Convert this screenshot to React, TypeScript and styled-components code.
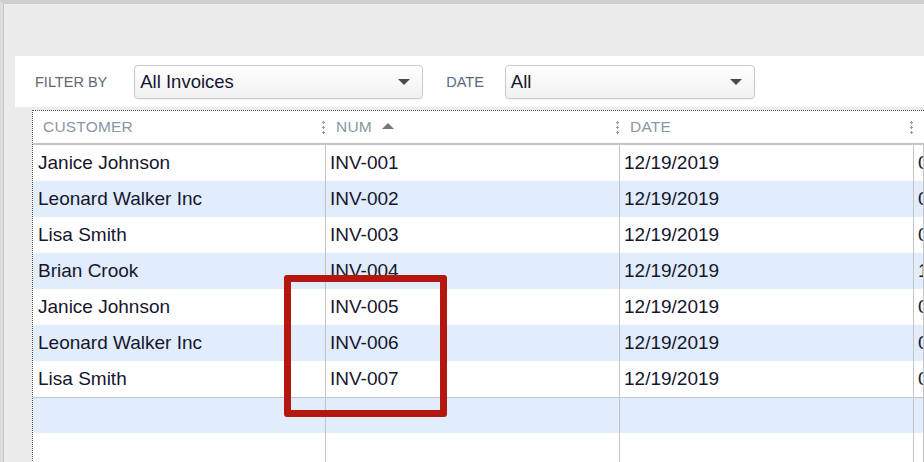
import React from "react";
import styled, { createGlobalStyle } from "styled-components";

type Invoice = { customer: string; num: string; date: string; extra: string };

const invoices: Invoice[] = [
  { customer: "Janice Johnson", num: "INV-001", date: "12/19/2019", extra: "0" },
  { customer: "Leonard Walker Inc", num: "INV-002", date: "12/19/2019", extra: "0" },
  { customer: "Lisa Smith", num: "INV-003", date: "12/19/2019", extra: "0" },
  { customer: "Brian Crook", num: "INV-004", date: "12/19/2019", extra: "1" },
  { customer: "Janice Johnson", num: "INV-005", date: "12/19/2019", extra: "0" },
  { customer: "Leonard Walker Inc", num: "INV-006", date: "12/19/2019", extra: "0" },
  { customer: "Lisa Smith", num: "INV-007", date: "12/19/2019", extra: "0" },
];

export default function App() {
  return (
    <>
      <GlobalStyle />
      <Window>
        <Panel>
          <FilterBar>
            <FilterLabel $after={27}>FILTER BY</FilterLabel>
            <Dropdown $width={289}>
              <span>All Invoices</span>
              <Caret />
            </Dropdown>
            <FilterLabel $before={23} $after={21}>
              DATE
            </FilterLabel>
            <Dropdown $width={250}>
              <span>All</span>
              <Caret />
            </Dropdown>
          </FilterBar>

          <Table>
            <HeaderRow>
              <HeaderCell>
                <span>CUSTOMER</span>
                <Grip />
              </HeaderCell>
              <HeaderCell>
                <HeaderTitle>
                  NUM <SortArrow />
                </HeaderTitle>
                <Grip />
              </HeaderCell>
              <HeaderCell>
                <span>DATE</span>
                <Grip />
              </HeaderCell>
              <HeaderCell />
            </HeaderRow>

            {invoices.map((inv, i) => (
              <Row key={inv.num} $alt={i % 2 === 1}>
                <Cell>{inv.customer}</Cell>
                <Cell>{inv.num}</Cell>
                <Cell>{inv.date}</Cell>
                <Cell>{inv.extra}</Cell>
              </Row>
            ))}
            <Row $alt $divider>
              <Cell />
              <Cell />
              <Cell />
              <Cell />
            </Row>
            <Row>
              <Cell />
              <Cell />
              <Cell />
              <Cell />
            </Row>
          </Table>
        </Panel>
        <Highlight />
      </Window>
    </>
  );
}

const GlobalStyle = createGlobalStyle`
  html, body {
    margin: 0;
    padding: 0;
    width: 924px;
    height: 462px;
    overflow: hidden;
    background: #ececec;
    font-family: "Liberation Sans", Arial, sans-serif;
  }
`;

const Window = styled.div`
  position: relative;
  width: 924px;
  height: 462px;
  box-sizing: border-box;
  border-top: 4px solid #cfcfcf;
  border-left: 3px solid #dedede;
  overflow: hidden;
`;

const Panel = styled.div`
  height: 100%;
  box-sizing: border-box;
  border-left: 1px solid #c6c6c6;
  background: #ececec;
  padding: 52px 0 0 11px;
  display: flex;
  flex-direction: column;
`;

const FilterBar = styled.div`
  height: 51px;
  background: #ffffff;
  display: flex;
  align-items: center;
  padding-left: 20px;
  flex-shrink: 0;
`;

const FilterLabel = styled.span<{ $before?: number; $after?: number }>`
  font-size: 14.5px;
  color: #5d6878;
  margin-left: ${(p) => p.$before ?? 0}px;
  margin-right: ${(p) => p.$after ?? 0}px;
`;

const Dropdown = styled.div<{ $width: number }>`
  width: ${(p) => p.$width}px;
  height: 34px;
  box-sizing: border-box;
  border: 1px solid #c9c9c9;
  border-radius: 4px;
  background: linear-gradient(#ffffff, #f1f1f1);
  box-shadow: 0 1px 1px rgba(0, 0, 0, 0.05);
  display: flex;
  align-items: center;
  justify-content: space-between;
  padding: 0 12px 0 5px;
  font-size: 18.5px;
  color: #161630;
`;

const Caret = styled.span`
  width: 0;
  height: 0;
  border-left: 6px solid transparent;
  border-right: 6px solid transparent;
  border-top: 6px solid #4a4a4a;
`;

const Table = styled.div`
  margin: 3px 0 0 17px;
  border-top: 1px dotted #555;
  border-left: 1px dotted #555;
  background: #ffffff;
  flex: 1;
`;

const columns = "293px 294px 294px 1fr";

const HeaderRow = styled.div`
  display: grid;
  grid-template-columns: ${columns};
  height: 32px;
  border-bottom: 2px solid #c4c4c4;
`;

const HeaderCell = styled.div`
  display: flex;
  align-items: center;
  justify-content: space-between;
  padding: 0 1px 0 10px;
  font-size: 15.5px;
  color: #8a97a5;
  letter-spacing: 0.2px;
`;

const HeaderTitle = styled.span`
  display: flex;
  align-items: center;
  gap: 10px;
`;

const SortArrow = styled.span`
  width: 0;
  height: 0;
  border-left: 6px solid transparent;
  border-right: 6px solid transparent;
  border-bottom: 6px solid #777;
  margin-top: -2px;
`;

const Grip = styled.span`
  width: 3px;
  height: 15px;
  background-image: radial-gradient(circle, #9a9a9a 1.2px, transparent 1.4px);
  background-size: 3px 5px;
`;

const Row = styled.div<{ $alt?: boolean; $divider?: boolean }>`
  display: grid;
  grid-template-columns: ${columns};
  height: 36px;
  background: ${(p) => (p.$alt ? "#e1edfd" : "#ffffff")};
  border-top: ${(p) => (p.$divider ? "1px solid #c4c4c4" : "none")};
  box-sizing: ${(p) => (p.$divider ? "border-box" : "content-box")};
`;

const Cell = styled.div`
  display: flex;
  align-items: center;
  padding-left: 4px;
  border-right: 1px solid #c4c4c4;
  font-size: 19px;
  color: #16162e;
  white-space: nowrap;
  overflow: hidden;
  &:first-child {
    padding-left: 5px;
  }
`;

const Highlight = styled.div`
  position: absolute;
  left: 281px;
  top: 271px;
  width: 163px;
  height: 142px;
  box-sizing: border-box;
  border: 7px solid #b3170f;
  border-radius: 3px;
`;
